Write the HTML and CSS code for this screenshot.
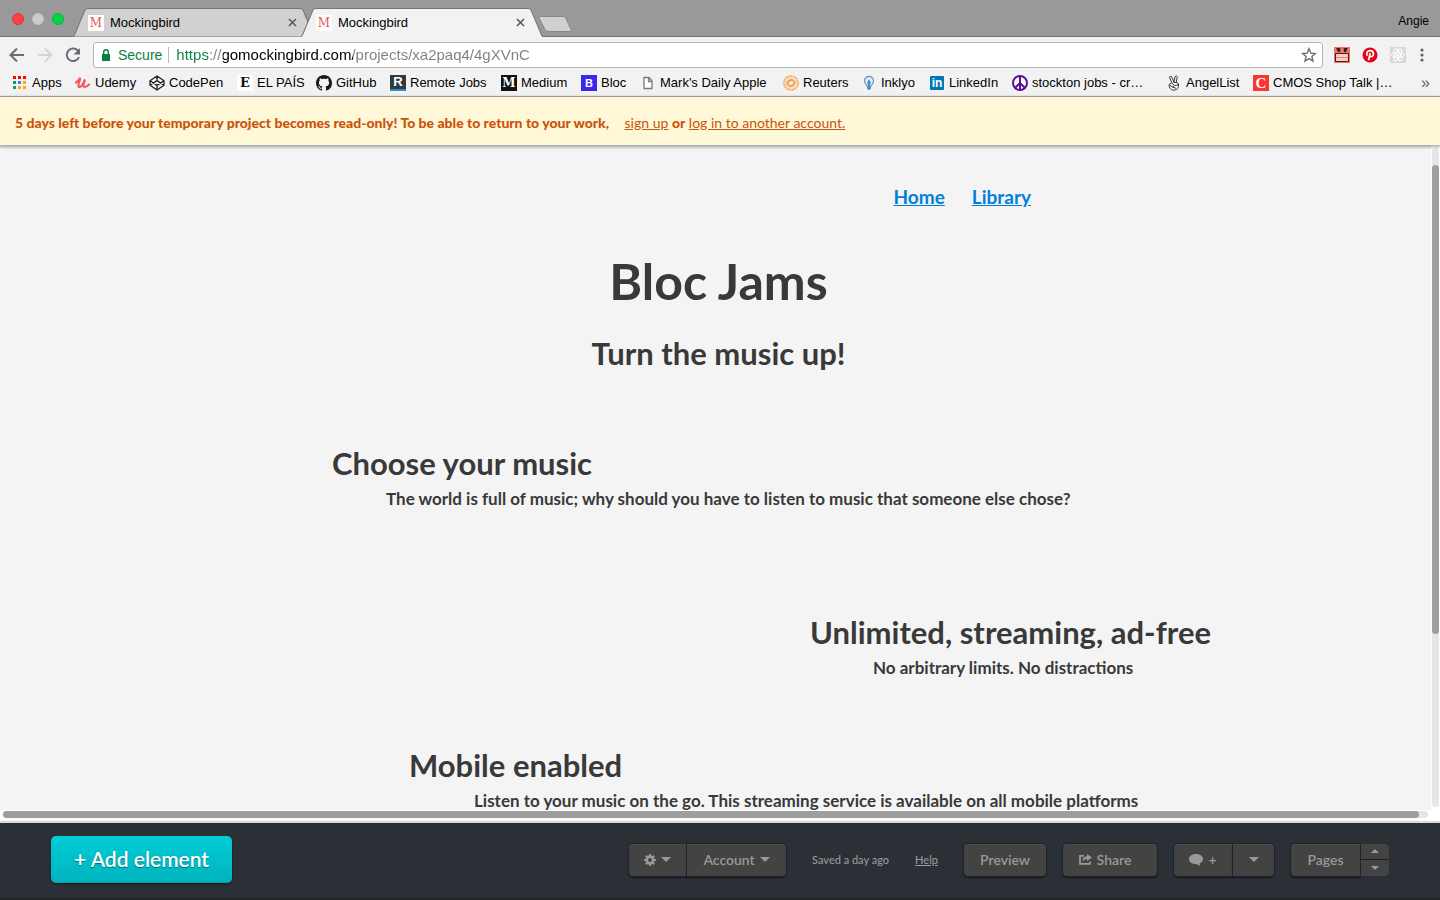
FILE: index.html
```html
<!DOCTYPE html>
<html lang="en">
<head>
<meta charset="utf-8">
<title>Mockingbird</title>
<link rel="stylesheet" href="styles.css">
</head>
<body>
<header class="browser">
  <div class="tabstrip">
    <div class="lights">
      <button class="light light-red" aria-label="Close window"></button>
      <button class="light light-gray" aria-label="Minimize window"></button>
      <button class="light light-green" aria-label="Zoom window"></button>
    </div>
    <div class="tab">
      <svg class="tab-shape" viewBox="0 0 242 28" preserveAspectRatio="none" aria-hidden="true"><path d="M0 27.5 Q1 27 1.500 26 L12 2 Q13 .5 15 .5 H227 Q229 .5 230 2 L240.500 26 Q241 27 242 27.500" fill="#d1d1d1" stroke="#747474"/></svg>
      <span class="favicon-m">M</span><span class="tab-title">Mockingbird</span>
      <button class="tab-close" aria-label="Close tab"><svg width="9" height="9" viewBox="0 0 9 9"><path d="M1 1l7 7M8 1l-7 7" stroke="#5a5a5a" stroke-width="1.600"/></svg></button>
    </div>
    <div class="tab tab-active">
      <svg class="tab-shape" viewBox="0 0 242 28" preserveAspectRatio="none" aria-hidden="true"><path d="M0 28 L1.500 26 L12 2 Q13 .5 15 .5 H227 Q229 .5 230 2 L240.500 26 L242 28" fill="#f2f2f2" stroke="#747474"/></svg>
      <span class="favicon-m">M</span><span class="tab-title">Mockingbird</span>
      <button class="tab-close" aria-label="Close tab"><svg width="9" height="9" viewBox="0 0 9 9"><path d="M1 1l7 7M8 1l-7 7" stroke="#5a5a5a" stroke-width="1.600"/></svg></button>
    </div>
    <button class="new-tab" aria-label="New tab"><svg width="34" height="17" viewBox="0 0 34 17"><path d="M2 .5H25q2 0 3 2l5 11q1 2-1 2H10q-2 0-3-2L1 2Q.5.5 2 .5z" fill="#d0d0d0" stroke="#888"/></svg></button>
    <button class="profile">Angie</button>
  </div>
  <div class="toolbar">
    <button class="tool" aria-label="Back"><svg width="16" height="16" viewBox="0 0 16 16" fill="none" stroke="#6a6e74" stroke-width="2"><path d="M15 8H2M8 1.500L1.500 8L8 14.500"/></svg></button>
    <button class="tool" aria-label="Forward"><svg width="16" height="16" viewBox="0 0 16 16" fill="none" stroke="#d5d5d7" stroke-width="2"><path d="M1 8h13M8 1.500L14.500 8L8 14.500"/></svg></button>
    <button class="tool" aria-label="Reload"><svg width="16" height="16" viewBox="0 0 16 16"><path d="M13.500 4.500A6.300 6.300 0 1 0 14 10" fill="none" stroke="#6a6e74" stroke-width="2"/><path d="M15 1v6.500H8.500z" fill="#6a6e74"/></svg></button>
    <div class="omnibox">
      <svg class="lock" width="8" height="12" viewBox="0 0 8 12"><path d="M0 5h8v7H0z" fill="#0b8043"/><path d="M1.700 5V3a2.300 2.300 0 0 1 4.600 0v2" fill="none" stroke="#0b8043" stroke-width="1.400"/></svg>
      <label class="secure" for="url">Secure</label>
      <input id="url" class="url" type="text" value="https://gomockingbird.com/projects/xa2paq4/4gXVnC">
      <button class="star" aria-label="Bookmark this page"><svg width="16" height="16" viewBox="0 0 16 16"><path d="M8 1.800l1.800 4.300 4.600.4-3.500 3 1.100 4.600L8 11.600l-4 2.500 1.100-4.600-3.500-3 4.600-.4z" fill="none" stroke="#6a6e74" stroke-width="1.400"/></svg></button>
    </div>
    <div class="extensions">
      <button class="ext" aria-label="Monster extension"><svg width="16" height="16" viewBox="0 0 16 16"><path d="M0 0h16v16H0z" fill="#f57364"/><path d="M2 1h4.500l-.5 4H4zM14 1H9.500l.5 4h2z" fill="#3a2022"/><path d="M1.500 6.500h13v8h-13z" fill="#ffc9c2" stroke="#3a2022"/><path d="M2 10.500h12" stroke="#e9867c"/></svg></button>
      <button class="ext" aria-label="Pinterest"><svg width="16" height="16" viewBox="0 0 16 16"><circle cx="8" cy="8" r="7.500" fill="#e60019"/><path d="M5.400 8.800C3.800 6.200 5.400 3.700 8.200 3.700c4.400 0 3.900 6 .8 6-.8 0-1.300-.4-1.500-.8M8.200 6L6.500 13.300" fill="none" stroke="#fff" stroke-width="1.700"/></svg></button>
      <button class="ext" aria-label="React tools"><svg width="16" height="16" viewBox="0 0 16 16"><path d="M0 0h16v16H0z" fill="#d9d9d9"/><g fill="none" stroke="#fff"><ellipse cx="8" cy="8" rx="6.500" ry="2.600"/><ellipse cx="8" cy="8" rx="6.500" ry="2.600" transform="rotate(60 8 8)"/><ellipse cx="8" cy="8" rx="6.500" ry="2.600" transform="rotate(120 8 8)"/></g><circle cx="8" cy="8" r="1.500" fill="#fff"/></svg></button>
      <button class="menu" aria-label="Menu"><svg width="4" height="14" viewBox="0 0 4 14" fill="#5f6368"><circle cx="2" cy="2" r="1.600"/><circle cx="2" cy="7" r="1.600"/><circle cx="2" cy="12" r="1.600"/></svg></button>
    </div>
  </div>
  <nav class="bookmarks" aria-label="Bookmarks">
    <a class="bm" href="#"><svg width="16" height="16" viewBox="0 0 16 16"><path fill="#f00" d="M1 1h3v3H1zM6 1h3v3H6zM11 1h3v3h-3z"/><path fill="#0f9d58" d="M1 6h3v3H1zM1 11h3v3H1z"/><path fill="#1a88f0" d="M6 6h3v3H6z"/><path fill="#f9a60b" d="M11 6h3v3h-3zM6 11h3v3H6zM11 11h3v3h-3z"/></svg>Apps</a>
    <a class="bm" href="#"><svg width="16" height="16" viewBox="0 0 16 16"><path d="M1 7.500C3 6 4.500 4 5 3.500c.8.500-3.500 8.500-.5 8.500C7.500 12 9 6 10 4.500c-1.500 4-2.500 7.500 0 7.500 1.500 0 2.500-1 4-2.500" fill="none" stroke="#ef5b60" stroke-width="2.200" stroke-linecap="round"/></svg>Udemy</a>
    <a class="bm" href="#"><svg width="16" height="16" viewBox="0 0 16 16"><path d="M8 1l7 4.700v4.600L8 15l-7-4.700V5.700zM8 1v4.600M8 10.400V15M1 5.700l7 4.700 7-4.700M1 10.300l7-4.700 7 4.700" fill="none" stroke="#222" stroke-width="1.300" stroke-linejoin="round"/></svg>CodePen</a>
    <a class="bm" href="#"><span class="chip chip-elpais">E</span>EL PAÍS</a>
    <a class="bm" href="#"><svg width="16" height="16" viewBox="0 0 16 16"><path fill="#191717" d="M8 0C3.580 0 0 3.580 0 8c0 3.540 2.290 6.530 5.470 7.590.4.070.55-.17.55-.38 0-.19-.01-.82-.01-1.490-2.010.37-2.530-.49-2.690-.94-.09-.23-.48-.94-.82-1.130-.28-.15-.68-.52-.01-.53.63-.01 1.080.58 1.230.82.720 1.210 1.870.87 2.330.66.070-.52.280-.87.510-1.070-1.780-.2-3.640-.89-3.640-3.950 0-.87.310-1.590.82-2.150-.08-.2-.36-1.020.08-2.120 0 0 .67-.21 2.200.82.640-.18 1.320-.27 2-.27s1.360.09 2 .27c1.530-1.040 2.200-.82 2.200-.82.440 1.100.160 1.920.080 2.120.510.560.820 1.270.820 2.150 0 3.070-1.870 3.750-3.650 3.950.290.250.540.730.540 1.480 0 1.070-.01 1.930-.01 2.200 0 .21.150.46.550.38A8.010 8.010 0 0 0 16 8c0-4.420-3.580-8-8-8z"/></svg>GitHub</a>
    <a class="bm" href="#"><span class="chip chip-remote">R</span>Remote Jobs</a>
    <a class="bm" href="#"><span class="chip chip-medium">M</span>Medium</a>
    <a class="bm" href="#"><span class="chip chip-bloc">B</span>Bloc</a>
    <a class="bm bm-page" href="#"><svg width="10" height="16" viewBox="0 0 10 16"><path d="M1 2.500h5l3 3.500v7.500H1zM5.500 2.500V6.500H9" fill="#fff" stroke="#777" stroke-width="1.300"/></svg>Mark's Daily Apple</a>
    <a class="bm" href="#"><svg width="16" height="16" viewBox="0 0 16 16"><circle cx="8" cy="8" r="6.800" fill="none" stroke="#f5b06a" stroke-width="2.200" stroke-dasharray="2 .6"/><circle cx="8" cy="8" r="4.500" fill="#f8c48d"/><path d="M4 10c0-5 5-6 7-4M12 6c0 5-5 6-7 4" fill="none" stroke="#f39a41" stroke-width="1.200"/><circle cx="8" cy="8" r="1.800" fill="#f2f2f2"/></svg>Reuters</a>
    <a class="bm" href="#"><svg width="16" height="16" viewBox="0 0 16 16"><path d="M6 11L3.800 7.500a4.500 4.500 0 1 1 8.400 0L10 11z" fill="#e7f0fa" stroke="#6c8fb5" stroke-width="1.200"/><path d="M8 4l2 4-1 1v6H7V9L6 8z" fill="#3b8ad8"/><path d="M6 11h4v3H6z" fill="#4a92d9"/></svg>Inklyo</a>
    <a class="bm" href="#"><span class="chip chip-in">in</span>LinkedIn</a>
    <a class="bm" href="#"><svg width="16" height="16" viewBox="0 0 16 16"><circle cx="8" cy="8" r="7" fill="#fff" stroke="#5b0f9b" stroke-width="2"/><path d="M8 1v14M8 8l-5 5M8 8l5 5" stroke="#5b0f9b" stroke-width="2"/></svg>stockton jobs - cr…</a>
    <a class="bm" href="#"><svg width="15" height="16" viewBox="0 0 15 16"><path d="M5 8L2.500 2.200Q3 .6 4.500 1.500L7 7l1.200-5.500Q9.500.2 10.300 1.700L9.200 7.500l2.300 1.200q.7 6.300-5 6.600Q2.300 14.800 2 9.500L4.500 8l3 2.500-1.500 1.800-3-2M6.500 7.500h3.200M7.500 10.500l3.500-.5M6 12.300l3 1" fill="#fff" stroke="#333" stroke-width="1"/></svg>AngelList</a>
    <a class="bm" href="#"><span class="chip chip-cmos">C</span>CMOS Shop Talk |…</a>
    <button class="more" aria-label="More bookmarks">»</button>
  </nav>
</header>

<div class="banner">
  <strong class="banner-lead">5 days left before your temporary project becomes read-only! To be able to return to your work,</strong>
  <a href="#">sign up</a> <strong>or</strong> <a href="#">log in to another account.</a>
</div>

<div class="workspace">
  <main class="canvas">
    <nav class="site-nav"><a href="#">Home</a><a href="#">Library</a></nav>
    <div class="hero">
      <h1>Bloc Jams</h1>
      <h2>Turn the music up!</h2>
    </div>
    <section class="feature feature-choose">
      <h2>Choose your music</h2>
      <p>The world is full of music; why should you have to listen to music that someone else chose?</p>
    </section>
    <section class="feature feature-unlimited">
      <h2>Unlimited, streaming, ad-free</h2>
      <p>No arbitrary limits. No distractions</p>
    </section>
    <section class="feature feature-mobile">
      <h2>Mobile enabled</h2>
      <p>Listen to your music on the go. This streaming service is available on all mobile platforms</p>
    </section>
  </main>
  <div class="vscroll"><div class="thumb vthumb"></div></div>
  <div class="hscroll"><div class="thumb hthumb"></div></div>
</div>

<footer class="dock">
  <button class="add">+ Add element</button>
  <div class="group">
    <button class="btn btn-gear" aria-label="Settings"><svg width="12" height="12" viewBox="0 0 12 12"><circle cx="6" cy="6" r="3.200" fill="none" stroke="#999" stroke-width="2.600"/><path d="M6 0v12M0 6h12M1.800 1.800l8.400 8.400M10.200 1.800l-8.400 8.400" stroke="#999" stroke-width="2.200"/><circle cx="6" cy="6" r="1.900" fill="#444"/></svg><i class="caret"></i></button>
    <button class="btn btn-account">Account<i class="caret"></i></button>
  </div>
  <span class="saved">Saved a day ago</span>
  <a class="help" href="#">Help</a>
  <div class="actions">
    <button class="btn btn-preview">Preview</button>
    <button class="btn btn-share"><svg width="13" height="11" viewBox="0 0 13 11"><path d="M5 1.800H1v8h10V7.500" fill="none" stroke="#999" stroke-width="1.800"/><path d="M8 0l5 3.500L8 7V5Q5 5 3.500 7.500 3.500 2.500 8 2.200z" fill="#999"/></svg>Share</button>
    <div class="group">
      <button class="btn btn-comment" aria-label="Add comment"><svg width="14" height="12" viewBox="0 0 14 12"><path d="M7 0c4 0 7 2.200 7 5 0 2-1.500 3.700-3.500 4.500L11.500 12 7 10C3 10 0 8 0 5s3-5 7-5z" fill="#999"/></svg><span>+</span></button>
      <button class="btn btn-drop" aria-label="Comment options"><i class="caret"></i></button>
    </div>
    <div class="group">
      <button class="btn btn-pages">Pages</button>
      <div class="stepper">
        <button aria-label="Previous page"><i class="caret caret-up"></i></button>
        <button aria-label="Next page"><i class="caret caret-small"></i></button>
      </div>
    </div>
  </div>
</footer>
</body>
</html>
```
FILE: styles.css
```css
* { box-sizing: border-box; }
body {
  margin: 0;
  height: 100vh;
  display: flex;
  flex-direction: column;
  overflow: hidden;
  font-family: Lato, "Open Sans", sans-serif;
  color: #393939;
  background: #f4f4f4;
}
button { font: inherit; color: inherit; border: 0; padding: 0; background: none; }
svg { display: block; flex: none; }

/* Browser chrome */
.browser {
  flex: none;
  background: #f2f2f2;
  border-bottom: 1px solid #b6b4b6;
  font-family: "Liberation Sans", Arial, sans-serif;
  font-size: 13px;
  color: #000;
}
.tabstrip {
  display: flex;
  align-items: flex-end;
  height: 37px;
  background: #999;
  box-shadow: inset 0 -1px #747474;
}
.lights { display: flex; gap: 8px; padding: 0 9px 12px 12px; }
.light { width: 12px; height: 12px; border-radius: 50%; }
.light-red { background: #fc4343; border: 1px solid #e2322f; }
.light-gray { background: #cdcdcd; border: 1px solid #c0c0c0; }
.light-green { background: #05d348; border: 1px solid #08b83a; }
.tab {
  position: relative;
  display: flex;
  align-items: center;
  width: 242px;
  height: 29px;
  padding: 0 18px 0 15px;
}
.tab-active { margin-left: -14px; }
.tab-shape { position: absolute; inset: 0; width: 100%; height: 100%; }
.favicon-m {
  position: relative;
  width: 16px;
  height: 16px;
  margin-right: 6px;
  background: #fff;
  color: #e4554e;
  font: 12px/16px "DejaVu Serif", serif;
  text-align: center;
}
.tab-title { position: relative; flex: 1; }
.tab-close { position: relative; }
.new-tab { margin: 0 0 4px -5px; }
.profile { margin: 0 11px 9px auto; font-size: 12px; }

.toolbar { display: flex; align-items: center; height: 36px; padding: 0 16px 0 9px; }
.tool { width: 28px; display: flex; align-items: center; }
.omnibox {
  flex: 1;
  display: flex;
  align-items: center;
  height: 26px;
  margin-right: 11px;
  padding: 0 5px 0 8px;
  background: #fff;
  border: 1px solid #b6b4b6;
  border-radius: 3px;
}
.lock { margin-right: 8px; }
.secure { color: #0b8043; font-size: 14px; padding-right: 6px; border-right: 1px solid #bbb; }
.url {
  flex: 1;
  min-width: 0;
  padding: 0;
  margin-left: 7px;
  border: 0;
  outline: 0;
  font: 15px/20px "Liberation Sans", Arial, sans-serif;
  color: transparent;
  background: linear-gradient(90deg, #0b8043 0 34px, #808080 34px 47px, #000 47px 177px, #808080 177px);
  -webkit-background-clip: text;
  background-clip: text;
}
.extensions { display: flex; align-items: center; gap: 12px; }
.menu { padding-left: 2px; }

.bookmarks {
  display: grid;
  grid-template-columns: 63px 74px 88px 79px 74px 111px 80px 61px 141px 78px 68px 83px 155px 86px 1fr auto;
  align-items: center;
  height: 23px;
  padding: 0 10px 4px 12px;
}
.bm { display: flex; align-items: center; gap: 4px; color: #000; text-decoration: none; white-space: nowrap; }
.bm-page { gap: 7px; padding-left: 1px; }
.chip {
  flex: none;
  width: 16px;
  height: 16px;
  line-height: 16px;
  text-align: center;
  color: #fff;
  font-weight: bold;
}
.chip-elpais { background: #fff; color: #111; font-family: "DejaVu Serif", serif; }
.chip-remote { background: #333a3f; box-shadow: inset 0 -2px #2d8fc4; line-height: 14px; }
.chip-medium { background: #111; font-family: "DejaVu Serif", serif; font-size: 12px; }
.chip-bloc { background: #3b28ee; font-size: 11px; }
.chip-in { background: #0077b5; width: 14px; height: 14px; line-height: 14px; margin: 0 1px; border-radius: 1px; font-size: 12px; }
.chip-cmos { background: #fb3434; font-family: "Liberation Serif", serif; font-size: 15px; }
.more { color: #666; font-size: 16px; line-height: 16px; }

/* Trial notice */
.banner {
  position: relative;
  flex: none;
  height: 48px;
  padding: 0 15px;
  background: #fef8d9;
  box-shadow: 0 1px 3px 1px rgba(0, 0, 0, .35);
  color: #cb5309;
  font-size: 14px;
  line-height: 52px;
  white-space: nowrap;
}
.banner a { color: #cb5309; }
.banner strong { font-weight: 900; }
.banner-lead { margin-right: 12px; }

/* Workspace */
.workspace {
  flex: 1;
  min-height: 0;
  display: grid;
  grid-template: minmax(0, 1fr) 13px / minmax(0, 1fr) 9px;
  background: #fff;
}
.canvas { overflow: hidden; background: #f4f4f4; padding-top: 40px; white-space: nowrap; }
.canvas h1, .canvas h2, .canvas p { margin: 0; font-weight: bold; }
.canvas h1 { font-size: 50px; line-height: 60px; }
.canvas h2 { font-size: 31px; line-height: 40px; }
.canvas p { font-size: 17px; line-height: 24px; margin-top: 4px; }
.site-nav {
  display: flex;
  justify-content: flex-end;
  gap: 27px;
  margin-right: 400px;
  font-size: 19px;
  line-height: 24px;
  font-weight: bold;
}
.site-nav a { color: #0080dc; }
.hero { text-align: center; padding: 42px 0 70px; margin-left: 6px; }
.hero h1 { margin-bottom: 22px; }
.feature-choose { padding: 0 0 101px 332px; }
.feature-choose p { padding-left: 54px; }
.feature-unlimited { padding: 0 0 65px 810px; }
.feature-unlimited p { padding-left: 63px; }
.feature-mobile { padding-left: 409px; }
.feature-mobile p { padding-left: 65px; }
.vscroll { margin: 3px 1px 3px 1px; padding-top: 17px; background: #e6e6e6; border-radius: 4px; }
.hscroll { margin: 1px 3px 5px; background: #e6e6e6; border-radius: 4px; }
.thumb { background: #9e9e9e; border-radius: 4px; }
.vthumb { height: 73%; }
.hthumb { height: 100%; margin-right: 9px; }

/* Bottom dock */
.dock {
  position: relative;
  flex: none;
  display: flex;
  align-items: center;
  height: 77px;
  padding: 0 51px 2px;
  background: #2b2f36;
  border-bottom: 2px solid #202328;
  box-shadow: 0 -2px 1px #dadada;
  color: #999;
  font-size: 14px;
}
.add {
  width: 181px;
  height: 47px;
  margin-right: auto;
  border-radius: 5px;
  background: linear-gradient(#00cdd5, #00b3be);
  box-shadow: 0 1px 2px #15181c, inset 0 -1px #0a9aa5;
  color: #fff;
  font-size: 21px;
  font-weight: 600;
  line-height: 24px;
  padding-bottom: 2px;
  text-shadow: 0 1px 1px rgba(0, 60, 70, .6);
}
.group, .actions { display: flex; }
.actions { gap: 17px; }
.group {
  gap: 1px;
  background: #1b2127;
  border-radius: 4px;
}
.btn {
  display: flex;
  align-items: center;
  justify-content: center;
  gap: 5px;
  height: 32px;
  border-radius: 4px;
  background: #434343;
  box-shadow: 0 0 0 1px #1f242a, 0 1px 1px 1px #14181d, inset 0 1px #4b4b4b;
  font-weight: 600;
}
.group .btn:first-child { border-radius: 4px 0 0 4px; }
.group .btn:last-child { border-radius: 0 4px 4px 0; }
.btn-gear { width: 57px; }
.btn-account { width: 99px; }
.btn-preview { width: 82px; }
.btn-share { width: 94px; padding-right: 10px; }
.btn-comment { width: 58px; }
.btn-drop { width: 41px; }
.btn-pages { width: 69px; }
.caret { border: 5px solid transparent; border-top-color: #999; border-bottom-width: 0; }
.caret-small { border-width: 4px 4px 0; }
.caret-up { border-width: 0 4px 4px; border-bottom-color: #999; }
.saved, .help { margin-left: 26px; font-size: 11px; font-weight: 500; }
.help { color: #999; margin-right: 26px; }
.stepper {
  display: grid;
  grid-template-rows: 1fr 1fr;
  gap: 1px;
  width: 28px;
  height: 32px;
  border-radius: 0 4px 4px 0;
  overflow: hidden;
}
.stepper button { display: grid; place-items: center; background: #434343; }
```
